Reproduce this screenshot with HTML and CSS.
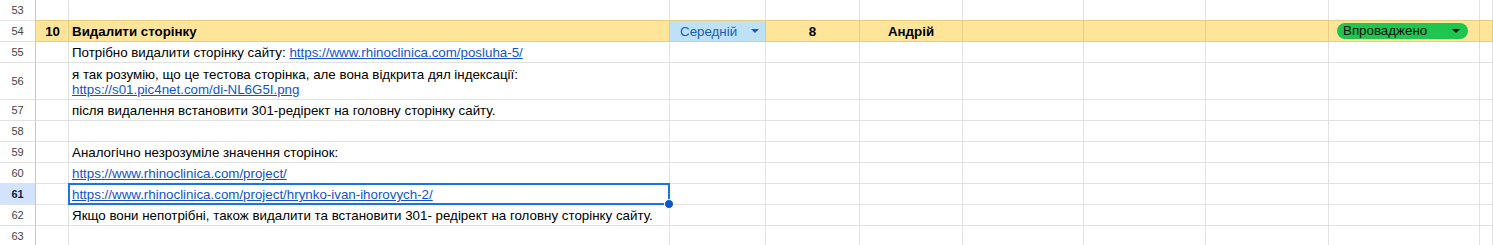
FILE: index.html
```html
<!DOCTYPE html>
<html>
<head>
<meta charset="utf-8">
<link rel="stylesheet" href="styles.css">
</head>
<body>
<div class="sheet">
  <!-- row 53 -->
  <div class="rh">53</div><div class="c"></div><div class="c"></div><div class="c"></div><div class="c"></div><div class="c"></div><div class="c"></div><div class="c"></div><div class="c"></div><div class="c"></div><div class="c"></div>
  <!-- row 54 -->
  <div class="rh">54</div>
  <div class="c y b right">10</div>
  <div class="c y b">Видалити сторінку</div>
  <div class="c y sel-chip"><span>Середній</span><span class="tri blue"></span></div>
  <div class="c y b center">8</div>
  <div class="c y b center">Андрій</div>
  <div class="c y"></div>
  <div class="c y"></div>
  <div class="c y"></div>
  <div class="c y status"><div class="pill"><span>Впроваджено</span><span class="tri dark"></span></div></div>
  <div class="c y"></div>
  <!-- row 55 -->
  <div class="rh">55</div><div class="c"></div>
  <div class="c">Потрібно видалити сторінку сайту:&nbsp;<a href="#">https://www.rhinoclinica.com/posluha-5/</a></div>
  <div class="c"></div><div class="c"></div><div class="c"></div><div class="c"></div><div class="c"></div><div class="c"></div><div class="c"></div><div class="c"></div>
  <!-- row 56 -->
  <div class="rh tall">56</div><div class="c"></div>
  <div class="c wrap">я так розумію, що це тестова сторінка, але вона відкрита дял індексації:<br><a href="#">https://s01.pic4net.com/di-NL6G5I.png</a></div>
  <div class="c"></div><div class="c"></div><div class="c"></div><div class="c"></div><div class="c"></div><div class="c"></div><div class="c"></div><div class="c"></div>
  <!-- row 57 -->
  <div class="rh">57</div><div class="c"></div>
  <div class="c">після видалення встановити 301-редірект на головну сторінку сайту.</div>
  <div class="c"></div><div class="c"></div><div class="c"></div><div class="c"></div><div class="c"></div><div class="c"></div><div class="c"></div><div class="c"></div>
  <!-- row 58 -->
  <div class="rh">58</div><div class="c"></div><div class="c"></div><div class="c"></div><div class="c"></div><div class="c"></div><div class="c"></div><div class="c"></div><div class="c"></div><div class="c"></div><div class="c"></div>
  <!-- row 59 -->
  <div class="rh">59</div><div class="c"></div>
  <div class="c">Аналогічно незрозуміле значення сторінок:</div>
  <div class="c"></div><div class="c"></div><div class="c"></div><div class="c"></div><div class="c"></div><div class="c"></div><div class="c"></div><div class="c"></div>
  <!-- row 60 -->
  <div class="rh">60</div><div class="c"></div>
  <div class="c"><a href="#">https://www.rhinoclinica.com/project/</a></div>
  <div class="c"></div><div class="c"></div><div class="c"></div><div class="c"></div><div class="c"></div><div class="c"></div><div class="c"></div><div class="c"></div>
  <!-- row 61 -->
  <div class="rh active">61</div><div class="c"></div>
  <div class="c selected"><a href="#">https://www.rhinoclinica.com/project/hrynko-ivan-ihorovych-2/</a><span class="handle"></span></div>
  <div class="c"></div><div class="c"></div><div class="c"></div><div class="c"></div><div class="c"></div><div class="c"></div><div class="c"></div><div class="c"></div>
  <!-- row 62 -->
  <div class="rh">62</div><div class="c"></div>
  <div class="c">Якщо вони непотрібні, також видалити та встановити 301- редірект на головну сторінку сайту.</div>
  <div class="c"></div><div class="c"></div><div class="c"></div><div class="c"></div><div class="c"></div><div class="c"></div><div class="c"></div><div class="c"></div>
  <!-- row 63 -->
  <div class="rh">63</div><div class="c"></div><div class="c"></div><div class="c"></div><div class="c"></div><div class="c"></div><div class="c"></div><div class="c"></div><div class="c"></div><div class="c"></div><div class="c"></div>
</div>
</body>
</html>
```

FILE: styles.css
```css
html, body {
  margin: 0;
  padding: 0;
  background: #fff;
}
body {
  font-family: "Liberation Sans", Arial, sans-serif;
  font-size: 13.33px;
  color: #000;
  overflow: hidden;
}
.sheet {
  display: grid;
  grid-template-columns: 36px 33px 601px 96px 94px 103px 121px 122px 123px 151px 1fr;
  grid-template-rows: 21px 21px 21px 37px 21px 21px 21px 21px 21px 21px 21px;
}
.rh {
  box-sizing: border-box;
  border-right: 1px solid #c7c7c7;
  border-bottom: 1px solid #e1e1e1;
  background: #fff;
  color: #444;
  font-size: 11px;
  display: flex;
  align-items: center;
  justify-content: center;
}
.rh.active {
  background: #d3e3fd;
  color: #0b1f44;
  font-weight: bold;
}
.c {
  box-sizing: border-box;
  border-right: 1px solid #e1e1e1;
  border-bottom: 1px solid #e1e1e1;
  padding: 0 3px 2px 3px;
  display: flex;
  align-items: flex-end;
  line-height: 15px;
  white-space: nowrap;
  position: relative;
}
.c.wrap {
  display: block;
  white-space: normal;
  padding-top: 4px;
}
.c.y {
  background: #ffe599;
  border-right-color: #e8cd7e;
  border-bottom-color: #e8cd7e;
  box-shadow: 0 -1px 0 #e8cd7e;
}
.b { font-weight: bold; }
.right { justify-content: flex-end; padding-right: 8px; }
.center { justify-content: center; }
a {
  color: #1155cc;
  text-decoration: underline;
}
.sel-chip {
  background: #bfe1f6 !important;
  color: #1a5cba;
  justify-content: space-between;
  align-items: center;
  padding: 0 6px 0 10px;
  border-right-color: #a9cde6 !important;
  border-bottom-color: #e8cd7e;
}
.tri {
  width: 0;
  height: 0;
  border-left: 4px solid transparent;
  border-right: 4px solid transparent;
  border-top: 4px solid #1a5cba;
}
.tri.dark { border-top-color: #111; }
.status {
  align-items: center;
  padding: 0 0 0 8px;
}
.pill {
  width: 131px;
  height: 16px;
  box-sizing: border-box;
  border-radius: 8px;
  background: #1ec54e;
  display: flex;
  align-items: center;
  justify-content: space-between;
  padding: 0 8px 0 6px;
  color: #111;
  line-height: 16px;
}
.selected::after {
  content: "";
  position: absolute;
  left: -1px;
  top: -1px;
  right: -1px;
  bottom: -1px;
  border: 2px solid #1a73e8;
  pointer-events: none;
}
.handle {
  position: absolute;
  right: -5px;
  bottom: -5px;
  width: 10px;
  height: 10px;
  border-radius: 50%;
  background: #0b57d0;
  border: 1px solid #fff;
  box-sizing: border-box;
  z-index: 2;
}
```
